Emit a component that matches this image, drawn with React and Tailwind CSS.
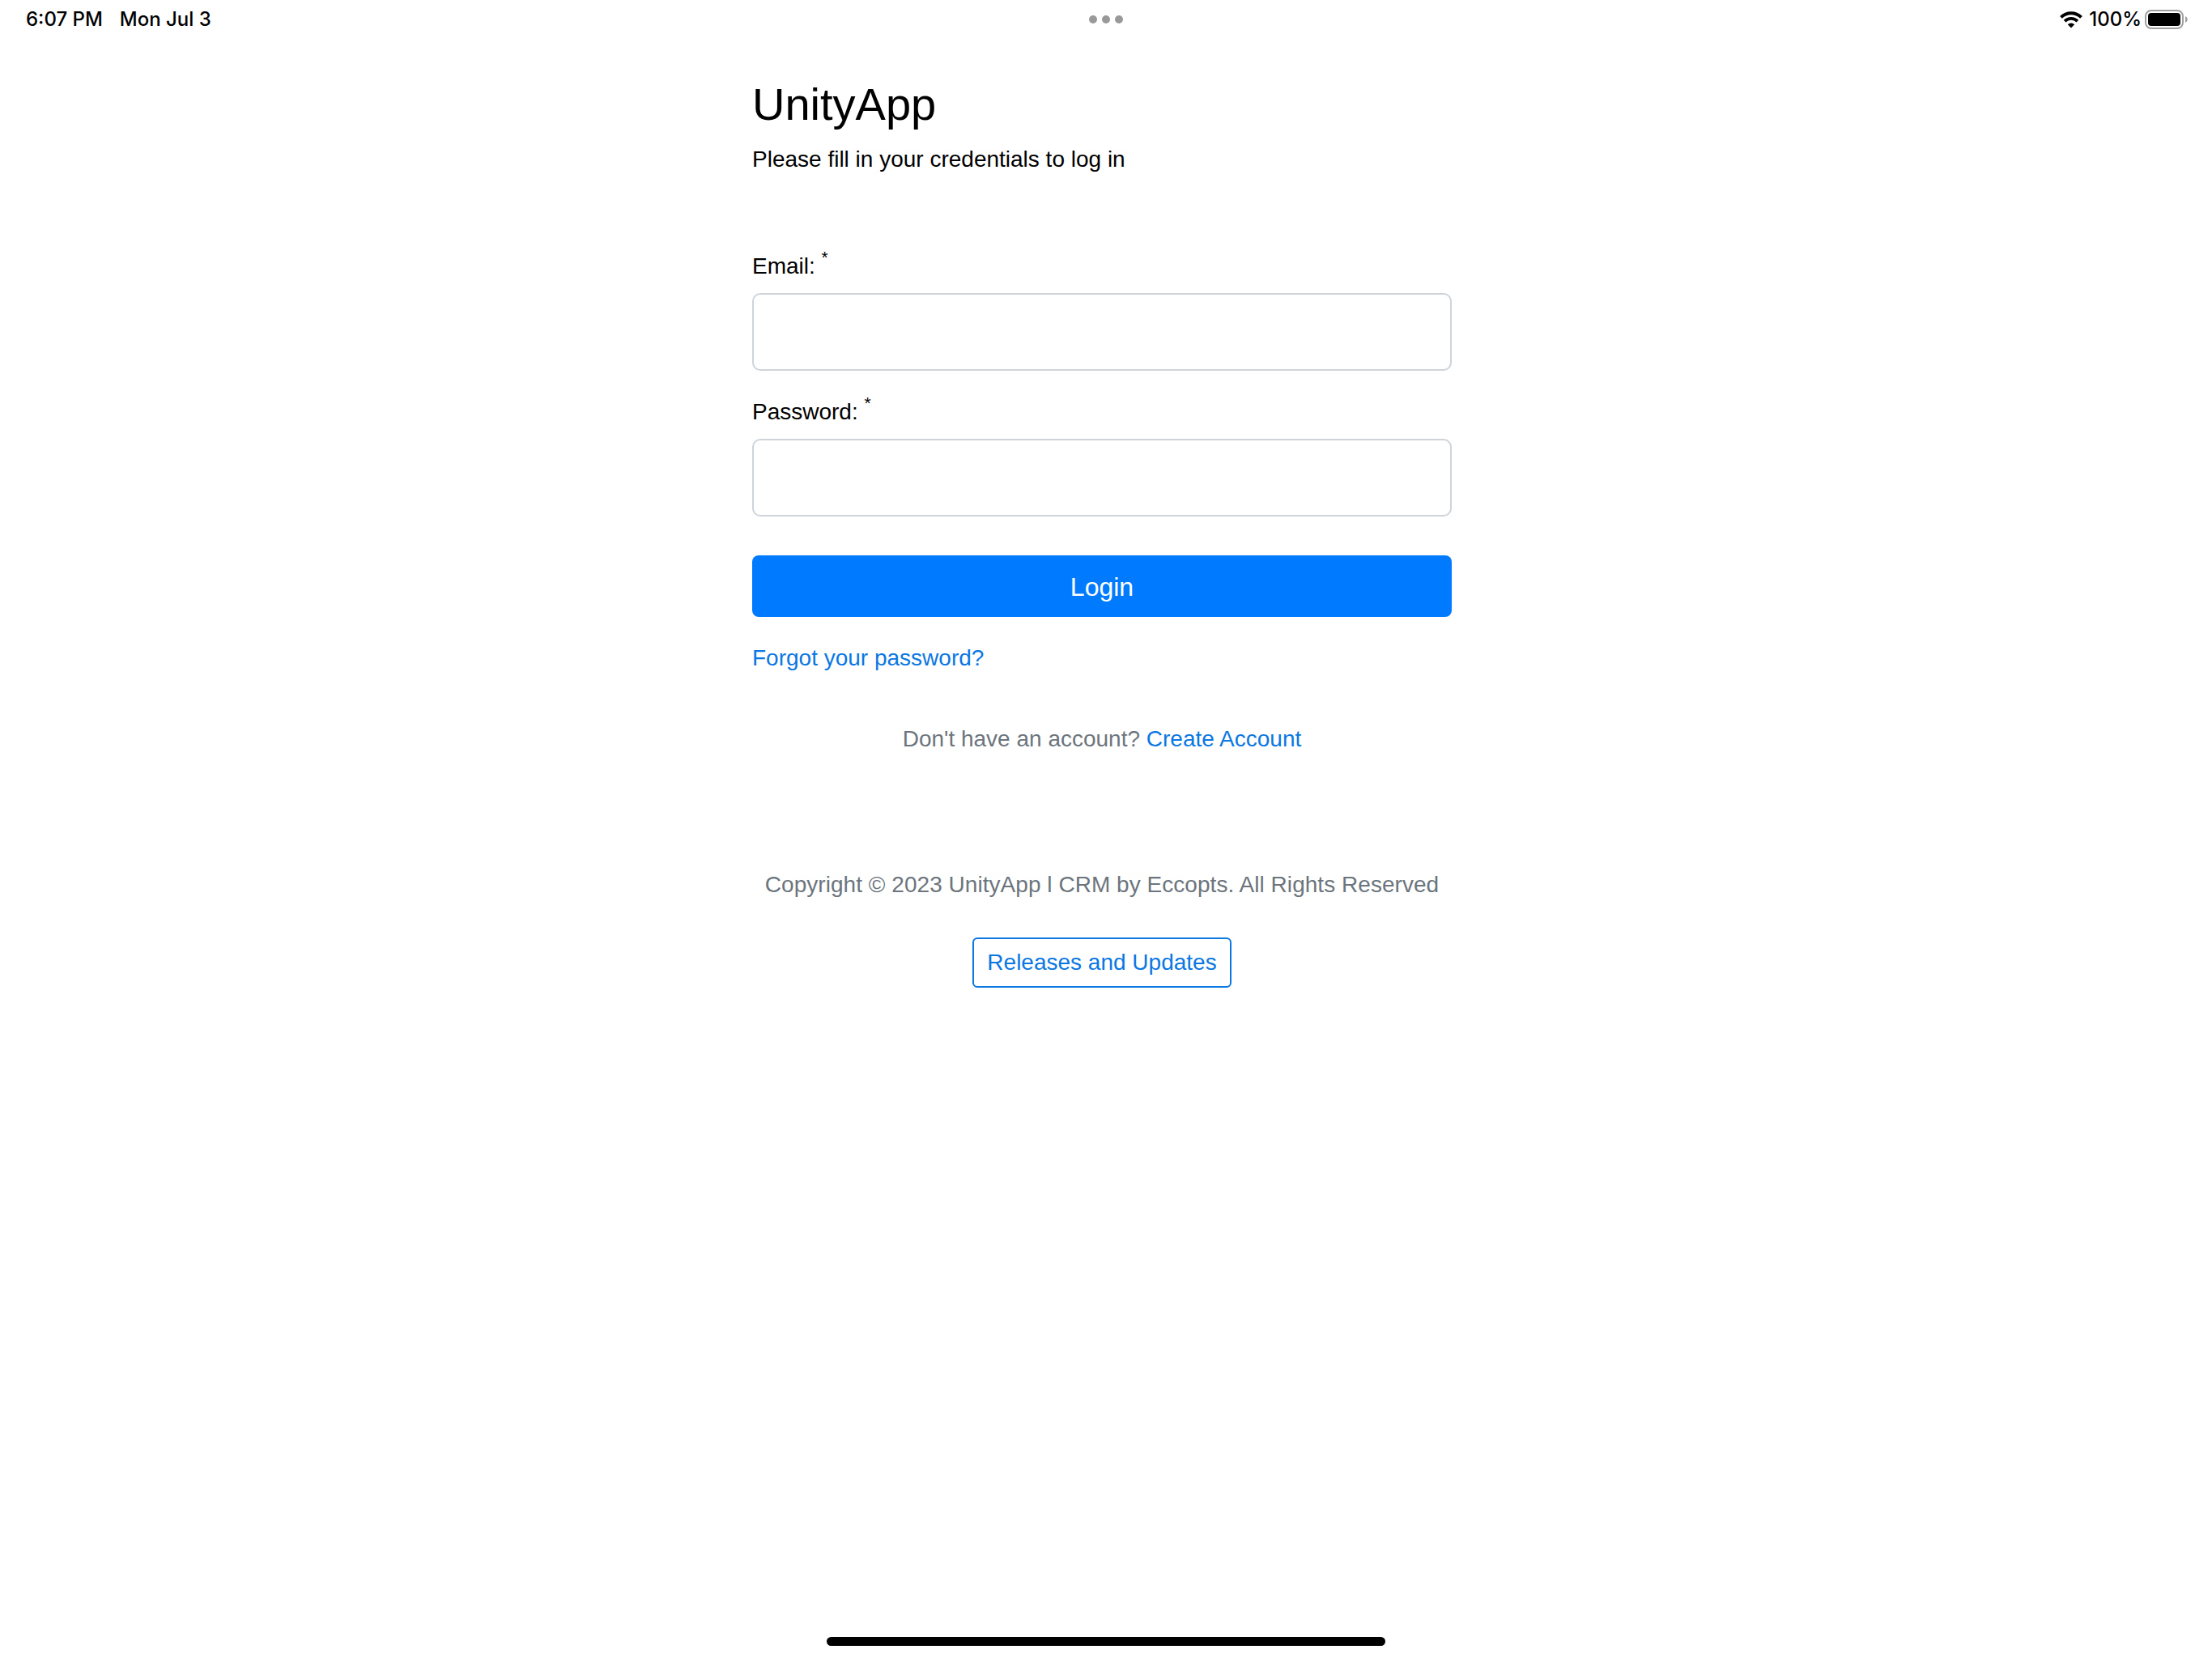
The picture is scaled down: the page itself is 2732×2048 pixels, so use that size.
import React, { useState } from "react";

const WifiIcon = () => (
  <svg width="28" height="21" viewBox="0 0 28 21" fill="none">
    <path d="M1.5 7.300a17.700 17.700 0 0 1 25 0" stroke="#000" strokeWidth="4" />
    <path d="M6.100 12.200a11.200 11.200 0 0 1 15.800 0" stroke="#000" strokeWidth="3.800" />
    <path d="M14 20.500l-4.200-4.300a6 6 0 0 1 8.400 0z" fill="#000" />
  </svg>
);

const BatteryIcon = () => (
  <svg width="54" height="24" viewBox="0 0 54 24" fill="none">
    <rect x="1" y="1" width="46" height="22" rx="7" stroke="#a0a0a0" strokeWidth="2" />
    <rect x="4" y="4" width="40" height="16" rx="4" fill="#000" />
    <path d="M50 8c1.600 .7 2.700 2.200 2.700 4s-1.100 3.300-2.700 4z" fill="#a0a0a0" />
  </svg>
);

const StatusBar = () => (
  <div className="grid h-12 grid-cols-3 items-center font-['Inter',sans-serif] text-2xl leading-none font-medium">
    <div className="flex gap-[21px] pl-8">
      <span>6:07 PM</span>
      <span>Mon Jul 3</span>
    </div>
    <div className="flex justify-center gap-1.5">
      <span className="size-2.5 rounded-full bg-[#999999]" />
      <span className="size-2.5 rounded-full bg-[#999999]" />
      <span className="size-2.5 rounded-full bg-[#999999]" />
    </div>
    <div className="flex items-center justify-end pr-[29px]">
      <WifiIcon />
      <span className="ml-2 mr-1">100%</span>
      <BatteryIcon />
    </div>
  </div>
);

const Field = ({ id, label, type, value, onChange }) => (
  <div>
    <label htmlFor={id} className="mb-3 block h-[42px]">
      {label}: <sup className="-top-[0.62em]">*</sup>
    </label>
    <input
      id={id}
      type={type}
      value={value}
      onChange={onChange}
      className="block h-24 w-full rounded-[10px] border-2 border-[#ced4da] bg-white px-6 outline-none"
    />
  </div>
);

const App = () => {
  const [email, setEmail] = useState("");
  const [password, setPassword] = useState("");

  return (
    <div className="flex h-screen flex-col bg-white text-black">
      <StatusBar />

      <main className="flex flex-1 justify-center pr-2.5 pt-[47px] font-['Liberation_Sans',Arial,sans-serif] text-[28px] leading-[42px]">
        <div className="w-[864px]">
          <h1 className="text-[56px] leading-[68px]">UnityApp</h1>
          <p className="mt-[13px]">Please fill in your credentials to log in</p>

          {/* Login form */}
          <form className="mt-[90px]" onSubmit={(e) => e.preventDefault()}>
            <div className="flex flex-col gap-[30px]">
              <Field
                id="email"
                label="Email"
                type="email"
                value={email}
                onChange={(e) => setEmail(e.target.value)}
              />
              <Field
                id="password"
                label="Password"
                type="password"
                value={password}
                onChange={(e) => setPassword(e.target.value)}
              />
            </div>
            <button
              type="submit"
              className="mt-12 block h-[76px] w-full rounded-lg bg-[#007bff] pt-0.5 text-[32px] text-white"
            >
              Login
            </button>
          </form>

          <p className="mt-[30px]">
            <a href="#forgot" className="text-[#0a77e2]">
              Forgot your password?
            </a>
          </p>

          {/* Footer */}
          <div className="text-center text-[#6c757d]">
            <p className="mt-[58px]">
              Don't have an account?{" "}
              <a href="#register" className="text-[#0a77e2]">
                Create Account
              </a>
            </p>
            <p className="mt-[138px] whitespace-nowrap tracking-[0.04px]">
              Copyright © 2023 UnityApp l CRM by Eccopts. All Rights Reserved
            </p>
            <a
              href="#releases"
              className="mx-auto mt-11 flex h-[62px] w-80 items-center justify-center rounded-md border-2 border-[#0a77e2] text-[#0a77e2]"
            >
              Releases and Updates
            </a>
          </div>
        </div>
      </main>

      {/* Home indicator */}
      <div className="mx-auto mb-[15px] h-[11px] w-[690px] rounded-full bg-black" />
    </div>
  );
};

export default App;
